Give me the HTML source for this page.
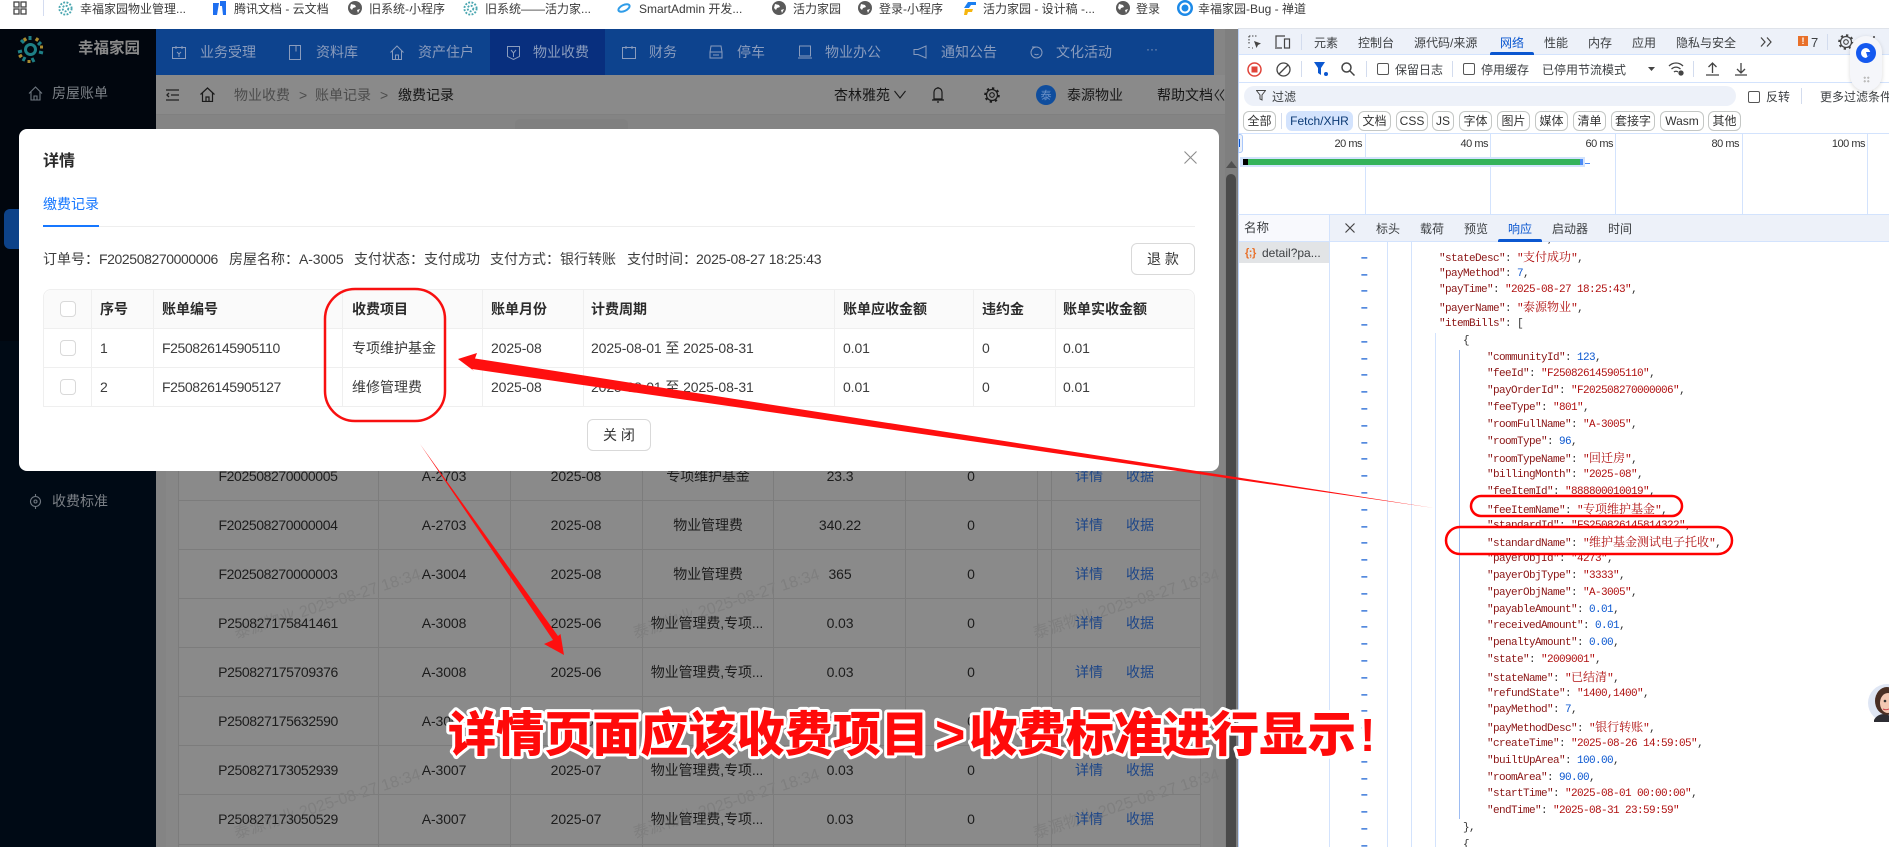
<!DOCTYPE html>
<html lang="zh"><head><meta charset="utf-8"><title>详情</title>
<style>
*{box-sizing:border-box}
html,body{margin:0;padding:0}
body{width:1889px;height:847px;overflow:hidden;position:relative;background:#fff;font-family:"Liberation Sans","Noto Sans CJK SC",sans-serif;font-size:14px;color:#333}
.a,.t,svg.a{position:absolute}
.t{white-space:nowrap;line-height:20px;height:20px}
.bm{font-size:12px;color:#3a3a3a;top:-1px}
.nv{color:#8a9cbd;top:42px}
.bt{color:#1c1c1c;letter-spacing:-.1px;text-align:center;transform:translateX(-50%)}
.id{letter-spacing:-.4px}
.ln{color:#1d4688;letter-spacing:0}
.h{height:1px;background:#7c7c7c;left:178px;width:1022px}
.v{width:1px;background:#7c7c7c;top:431px;height:416px}
.mv{width:1px;background:#efefef;top:289px;height:117px}
.mh{height:1px;background:#efefef;left:43px;width:1152px}
.th{font-weight:700;color:#2b2b2b;top:299px;font-size:14px}
.td{color:#3c3c3c;letter-spacing:-.1px}
.tid{letter-spacing:-.4px}
.cb{width:16px;height:16px;border:1px solid #d9d9d9;border-radius:4px;background:#fff;left:60px}
.btn{border:1px solid #d9d9d9;border-radius:6px;background:#fff;text-align:center;color:#333;height:32px;line-height:30px;width:64px}
.d{font-size:12px;color:#3d4043;line-height:16px;height:16px;white-space:nowrap;position:absolute}
.tab{top:35px}
.sep{width:1px;background:#d3dcee;position:absolute}
.chip{position:absolute;top:111px;height:20px;border:1px solid #c4c7c5;border-radius:6px;font-size:12px;line-height:18px;text-align:center;color:#333;background:#fff}
.dck{width:12px;height:12px;border:1px solid #555;border-radius:2px;position:absolute}
.gl{position:absolute;width:1px;top:133px;height:81px;background:#d3e3fd}
.tl{position:absolute;top:137px;font-size:11px;letter-spacing:-.5px;color:#333;line-height:14px;text-align:right;width:40px}
.rv{position:absolute;width:1px;background:#d3e3fd}
#j{position:absolute;left:1330px;top:242px;width:559px;height:605px;overflow:hidden;background:transparent}
#ji{position:absolute;left:0;top:-10px;width:559px}
.l{height:16.8px;line-height:16.8px;white-space:nowrap;font-family:"Liberation Mono","Noto Serif CJK SC",monospace;font-size:11px;letter-spacing:-.6px;color:#333}
.l i{font-style:normal;font-family:"Noto Serif CJK SC","Liberation Serif",serif;font-size:12px;letter-spacing:0}
.l b{font-weight:400;color:#8b1515}
.l u{text-decoration:none;color:#b01010}
.l s{text-decoration:none;color:#0b57d0}
.p1{padding-left:109px}.p2{padding-left:133px}.p3{padding-left:157px}
#ds{position:absolute;left:1361px;top:232px;width:8px}
#ds div{height:16.8px;line-height:16.8px;color:#0b57d0;font-size:12px;font-weight:700}
.wm{position:absolute;color:#7f7f7f;font-size:16px;white-space:nowrap;transform:rotate(-18deg);transform-origin:0 50%;line-height:20px}
</style></head><body>

<!-- bookmarks -->
<div class="a" style="left:0;top:0;width:1889px;height:29px;background:#fff"></div>
<svg class="a" style="left:13px;top:1px" width="14" height="14" viewBox="0 0 14 14" fill="none" stroke="#444" stroke-width="1.3"><rect x="1" y="1" width="5" height="5"/><rect x="8" y="1" width="5" height="5"/><rect x="1" y="8" width="5" height="5"/><rect x="8" y="8" width="5" height="5"/></svg>
<div class="a" style="left:43px;top:0;width:1px;height:16px;background:#d4dcf0"></div>
<svg class="a" style="left:58px;top:1px" width="15" height="15" viewBox="0 0 16 16" fill="none" stroke="#4aa6b0" stroke-width="2" stroke-dasharray="2 1.5"><circle cx="8" cy="8" r="3"/><circle cx="8" cy="8" r="6.5"/></svg>
<div class="t bm" style="left:80px">幸福家园物业管理...</div>
<svg class="a" style="left:212px;top:0" width="15" height="15" viewBox="0 0 15 15"><path d="M1 3h6L5 15H1zM8 1h6v14h-3l-1-9H8z" fill="#1e6ff0"/></svg>
<div class="t bm" style="left:234px">腾讯文档 - 云文档</div>
<svg class="a" style="left:348px;top:1px" width="14" height="14" viewBox="0 0 14 14"><circle cx="7" cy="7" r="7" fill="#5a5a5a"/><path d="M3 3l4 1 1 2-3 1-1 2-2-2zM9 9l3-1-2 4z" fill="#fff"/></svg>
<div class="t bm" style="left:369px">旧系统-小程序</div>
<svg class="a" style="left:463px;top:1px" width="15" height="15" viewBox="0 0 16 16" fill="none" stroke="#4aa6b0" stroke-width="2" stroke-dasharray="2 1.5"><circle cx="8" cy="8" r="3"/><circle cx="8" cy="8" r="6.5"/></svg>
<div class="t bm" style="left:485px">旧系统——活力家...</div>
<svg class="a" style="left:617px;top:2px" width="14" height="12" viewBox="0 0 14 12" fill="none" stroke="#2f9ce8" stroke-width="2"><ellipse cx="7" cy="6" rx="6" ry="3" transform="rotate(-25 7 6)"/></svg>
<div class="t bm" style="left:639px">SmartAdmin 开发...</div>
<svg class="a" style="left:772px;top:1px" width="14" height="14" viewBox="0 0 14 14"><circle cx="7" cy="7" r="7" fill="#5a5a5a"/><path d="M3 3l4 1 1 2-3 1-1 2-2-2zM9 9l3-1-2 4z" fill="#fff"/></svg>
<div class="t bm" style="left:793px">活力家园</div>
<svg class="a" style="left:858px;top:1px" width="14" height="14" viewBox="0 0 14 14"><circle cx="7" cy="7" r="7" fill="#5a5a5a"/><path d="M3 3l4 1 1 2-3 1-1 2-2-2zM9 9l3-1-2 4z" fill="#fff"/></svg>
<div class="t bm" style="left:879px">登录-小程序</div>
<svg class="a" style="left:963px;top:2px" width="14" height="13" viewBox="0 0 14 13"><path d="M5 0h8v3H8L6 6H1z" fill="#1c7ff0"/><path d="M2 7h8l-1 3H5l-1 3H1z" fill="#f5b50e"/></svg>
<div class="t bm" style="left:983px">活力家园 - 设计稿 -...</div>
<svg class="a" style="left:1116px;top:1px" width="14" height="14" viewBox="0 0 14 14"><circle cx="7" cy="7" r="7" fill="#5a5a5a"/><path d="M3 3l4 1 1 2-3 1-1 2-2-2zM9 9l3-1-2 4z" fill="#fff"/></svg>
<div class="t bm" style="left:1136px">登录</div>
<svg class="a" style="left:1177px;top:0" width="16" height="16" viewBox="0 0 16 16"><circle cx="8" cy="8" r="8" fill="#1d8ae8"/><circle cx="8" cy="8" r="4.5" fill="none" stroke="#fff" stroke-width="2"/></svg>
<div class="t bm" style="left:1198px">幸福家园-Bug - 禅道</div>

<!-- page behind -->
<div class="a" style="left:0;top:29px;width:156px;height:818px;background:#000a15"></div>
<div class="a" style="left:0;top:29px;width:156px;height:312px;background:#01060e"></div>
<div class="a" style="left:4px;top:209px;width:60px;height:40px;background:#0d4289;border-radius:6px"></div>
<svg class="a" style="left:16px;top:35px" width="29" height="29" viewBox="0 0 29 29" fill="none" stroke-width="3"><circle cx="14.5" cy="14.5" r="5" stroke="#1e7f86"/><path d="M14 1v4M25 7l-3 3M27 18l-4-1M18 27l-2-4M7 26l2-4M2 17l4-1M5 5l3 3" stroke="#1e7f86"/><path d="M8 3l2 3M22 3l-2 3M27 12h-3M13 28v-3M3 22l3-2" stroke="#a88a30"/></svg>
<div class="t" style="left:78px;top:39px;font-weight:700;font-size:15.5px;color:#8a8a8a">幸福家园</div>
<svg class="a" style="left:28px;top:86px" width="15" height="15" viewBox="0 0 15 15" fill="none" stroke="#6f7780" stroke-width="1.1"><path d="M1 7.5 7.5 1 14 7.5M3 6v8h9V6M6 14v-4h3v4"/></svg>
<div class="t" style="left:52px;top:83px;color:#7b8086">房屋账单</div>
<svg class="a" style="left:28px;top:494px" width="15" height="15" viewBox="0 0 15 15" fill="none" stroke="#6f7780" stroke-width="1.1"><circle cx="7.5" cy="7.5" r="5"/><circle cx="7.5" cy="7.5" r="1.5"/><path d="M7.5 0v2.5M7.5 12.5V15"/></svg>
<div class="t" style="left:52px;top:491px;color:#7b8086">收费标准</div>

<!-- nav -->
<div class="a" style="left:156px;top:29px;width:1058px;height:46px;background:#0d438e"></div>
<div class="a" style="left:490px;top:29px;width:115px;height:46px;background:#082f7e"></div>
<div class="a" style="left:1214px;top:29px;width:11px;height:46px;background:#858585"></div>
<svg class="a" style="left:172px;top:45px" width="14" height="14" viewBox="0 0 14 14" fill="none" stroke="#8a9cbd"><rect x=".5" y="2.5" width="13" height="11"/><path d="M4 1v3M10 1v3M5 7l2 2 2-2M7 9v3"/></svg>
<div class="t nv" style="left:200px">业务受理</div>
<svg class="a" style="left:289px;top:45px" width="12" height="15" viewBox="0 0 12 15" fill="none" stroke="#8a9cbd"><rect x=".5" y=".5" width="11" height="14"/><path d="M7 .5v6"/></svg>
<div class="t nv" style="left:316px">资料库</div>
<svg class="a" style="left:390px;top:45px" width="14" height="15" viewBox="0 0 14 15" fill="none" stroke="#8a9cbd"><path d="M.5 7.5 7 1l6.5 6.5M2.5 6v8.500h9V6M5.500 14.500V10h3v4.500"/></svg>
<div class="t nv" style="left:418px">资产住户</div>
<svg class="a" style="left:507px;top:45px" width="13" height="15" viewBox="0 0 13 15" fill="none" stroke="#8a9cbd"><path d="M.5 1.500h12v10l-6 3-6-3zM4 5l2.500 3L9 5M6.500 8v4"/></svg>
<div class="t nv" style="left:533px">物业收费</div>
<svg class="a" style="left:622px;top:45px" width="14" height="14" viewBox="0 0 14 14" fill="none" stroke="#8a9cbd"><rect x=".5" y="2.500" width="13" height="11"/><path d="M4 1v3M10 1v3"/></svg>
<div class="t nv" style="left:649px">财务</div>
<svg class="a" style="left:709px;top:45px" width="14" height="14" viewBox="0 0 14 14" fill="none" stroke="#8a9cbd"><path d="M2 1h10l1 6v6H1V7zM1 7h12M4 10h6"/></svg>
<div class="t nv" style="left:737px">停车</div>
<svg class="a" style="left:798px;top:45px" width="14" height="14" viewBox="0 0 14 14" fill="none" stroke="#8a9cbd"><path d="M1.500 1h11v10h-11zM0 13h14"/></svg>
<div class="t nv" style="left:825px">物业办公</div>
<svg class="a" style="left:913px;top:45px" width="14" height="14" viewBox="0 0 14 14" fill="none" stroke="#8a9cbd"><path d="M13 1v12L5 9.500H1v-5h4z"/></svg>
<div class="t nv" style="left:941px">通知公告</div>
<svg class="a" style="left:1030px;top:45px" width="13" height="14" viewBox="0 0 13 14" fill="none" stroke="#8a9cbd"><circle cx="6.500" cy="7.500" r="5.500"/><path d="M2 2h4M4.500 6h.01M8.500 6h.01M4.500 9c1 1 3 1 4 0"/></svg>
<div class="t nv" style="left:1056px">文化活动</div>
<div class="t nv" style="left:1146px;top:39px;font-size:12px">···</div>

<!-- breadcrumb bar -->
<div class="a" style="left:156px;top:75px;width:1069px;height:772px;background:#848484"></div>
<div class="a" style="left:166px;top:129px;width:1047px;height:718px;background:#878787"></div>
<div class="a" style="left:178px;top:431px;width:1022px;height:416px;background:#8a8a8a"></div>
<div class="a" style="left:156px;top:75px;width:1069px;height:39px;background:#8a8a8a"></div>
<div class="a" style="left:156px;top:114px;width:1069px;height:1px;background:#808080"></div>
<div class="a" style="left:515px;top:119px;width:113px;height:12px;background:#808080;border-radius:5px 5px 0 0"></div>
<svg class="a" style="left:166px;top:89px" width="14" height="12" viewBox="0 0 14 12" fill="none" stroke="#222" stroke-width="1.3"><path d="M0 1h13M5 6h8M0 11h13M3 4 1 6l2 2"/></svg>
<svg class="a" style="left:200px;top:87px" width="15" height="15" viewBox="0 0 15 15" fill="none" stroke="#1a1a1a" stroke-width="1.2"><path d="M.5 7.500 7.500 1l7 6.500M2.500 6v8.500h10V6M6 14.500V10h3v4.500"/></svg>
<div class="t" style="left:234px;top:85px;color:#4c4c4c">物业收费</div>
<div class="t" style="left:299px;top:85px;color:#4c4c4c">&gt;</div>
<div class="t" style="left:315px;top:85px;color:#4c4c4c">账单记录</div>
<div class="t" style="left:380px;top:85px;color:#4c4c4c">&gt;</div>
<div class="t" style="left:398px;top:85px;color:#161616">缴费记录</div>
<div class="t" style="left:834px;top:85px;color:#161616">杏林雅苑</div>
<svg class="a" style="left:894px;top:90px" width="12" height="9" viewBox="0 0 12 9" fill="none" stroke="#1a1a1a" stroke-width="1.1"><path d="M.5 1 6 8l5.500-7"/></svg>
<svg class="a" style="left:931px;top:86px" width="14" height="18" viewBox="0 0 14 18" fill="none" stroke="#1a1a1a" stroke-width="1.2"><path d="M7 1v1M3 13V6a4 4 0 0 1 8 0v7zM1 14h12M6 16h2"/></svg>
<svg class="a" style="left:984px;top:87px" width="16" height="16" viewBox="0 0 16 16" fill="none" stroke="#1a1a1a"><circle cx="8" cy="8" r="5.500" stroke-width="1.200"/><circle cx="8" cy="8" r="2.300" stroke-width="1.100"/><circle cx="8" cy="8" r="6.800" stroke-width="2" stroke-dasharray="2.300 3"/></svg>
<div class="a" style="left:1036px;top:85px;width:20px;height:20px;border-radius:50%;background:#0f4d9d;color:#6c92c8;font-size:11px;text-align:center;line-height:22px">泰</div>
<div class="t" style="left:1067px;top:85px;color:#161616">泰源物业</div>
<div class="t" style="left:1157px;top:85px;color:#161616">帮助文档</div>
<svg class="a" style="left:1214px;top:89px" width="11" height="12" viewBox="0 0 11 12" fill="none" stroke="#1a1a1a" stroke-width="1"><path d="M5 .5 1 6l4 5.500M10 .5 6 6l4 5.500"/></svg>

<!-- background table -->
<div class="a h" style="top:500px"></div><div class="a h" style="top:549px"></div><div class="a h" style="top:598px"></div><div class="a h" style="top:647px"></div><div class="a h" style="top:696px"></div><div class="a h" style="top:745px"></div><div class="a h" style="top:794px"></div><div class="a h" style="top:844px"></div>
<div class="a v" style="left:178px"></div><div class="a v" style="left:378px"></div><div class="a v" style="left:510px"></div><div class="a v" style="left:642px"></div><div class="a v" style="left:773px"></div><div class="a v" style="left:905px"></div><div class="a v" style="left:1037px"></div><div class="a v" style="left:1051px"></div><div class="a v" style="left:1200px"></div>

<div class="wm" style="left:235px;top:625px">泰源物业 2025-08-27 18:34</div>
<div class="wm" style="left:634px;top:625px">泰源物业 2025-08-27 18:34</div>
<div class="wm" style="left:1034px;top:625px;width:200px;overflow:hidden">泰源物业 2025-08-27 18:34</div>
<div class="wm" style="left:235px;top:825px">泰源物业 2025-08-27 18:34</div>
<div class="wm" style="left:634px;top:825px">泰源物业 2025-08-27 18:34</div>
<div class="wm" style="left:1034px;top:825px;width:200px;overflow:hidden">泰源物业 2025-08-27 18:34</div>

<div class="t bt id" style="left:278px;top:466px">F202508270000005</div><div class="t bt" style="left:444px;top:466px">A-2703</div><div class="t bt" style="left:576px;top:466px">2025-08</div><div class="t bt" style="left:708px;top:466px">专项维护基金</div><div class="t bt" style="left:840px;top:466px">23.3</div><div class="t bt" style="left:971px;top:466px">0</div><div class="t bt ln" style="left:1089px;top:466px">详情</div><div class="t bt ln" style="left:1140px;top:466px">收据</div>
<div class="t bt id" style="left:278px;top:515px">F202508270000004</div><div class="t bt" style="left:444px;top:515px">A-2703</div><div class="t bt" style="left:576px;top:515px">2025-08</div><div class="t bt" style="left:708px;top:515px">物业管理费</div><div class="t bt" style="left:840px;top:515px">340.22</div><div class="t bt" style="left:971px;top:515px">0</div><div class="t bt ln" style="left:1089px;top:515px">详情</div><div class="t bt ln" style="left:1140px;top:515px">收据</div>
<div class="t bt id" style="left:278px;top:564px">F202508270000003</div><div class="t bt" style="left:444px;top:564px">A-3004</div><div class="t bt" style="left:576px;top:564px">2025-08</div><div class="t bt" style="left:708px;top:564px">物业管理费</div><div class="t bt" style="left:840px;top:564px">365</div><div class="t bt" style="left:971px;top:564px">0</div><div class="t bt ln" style="left:1089px;top:564px">详情</div><div class="t bt ln" style="left:1140px;top:564px">收据</div>
<div class="t bt id" style="left:278px;top:613px">P250827175841461</div><div class="t bt" style="left:444px;top:613px">A-3008</div><div class="t bt" style="left:576px;top:613px">2025-06</div><div class="t bt" style="left:707px;top:613px">物业管理费,专项...</div><div class="t bt" style="left:840px;top:613px">0.03</div><div class="t bt" style="left:971px;top:613px">0</div><div class="t bt ln" style="left:1089px;top:613px">详情</div><div class="t bt ln" style="left:1140px;top:613px">收据</div>
<div class="t bt id" style="left:278px;top:662px">P250827175709376</div><div class="t bt" style="left:444px;top:662px">A-3008</div><div class="t bt" style="left:576px;top:662px">2025-06</div><div class="t bt" style="left:707px;top:662px">物业管理费,专项...</div><div class="t bt" style="left:840px;top:662px">0.03</div><div class="t bt" style="left:971px;top:662px">0</div><div class="t bt ln" style="left:1089px;top:662px">详情</div><div class="t bt ln" style="left:1140px;top:662px">收据</div>
<div class="t bt id" style="left:278px;top:711px">P250827175632590</div><div class="t bt" style="left:444px;top:711px">A-3008</div><div class="t bt" style="left:576px;top:711px">2025-06</div><div class="t bt" style="left:707px;top:711px">物业管理费,专项...</div><div class="t bt" style="left:840px;top:711px">0.03</div><div class="t bt" style="left:971px;top:711px">0</div><div class="t bt ln" style="left:1089px;top:711px">详情</div><div class="t bt ln" style="left:1140px;top:711px">收据</div>
<div class="t bt id" style="left:278px;top:760px">P250827173052939</div><div class="t bt" style="left:444px;top:760px">A-3007</div><div class="t bt" style="left:576px;top:760px">2025-07</div><div class="t bt" style="left:707px;top:760px">物业管理费,专项...</div><div class="t bt" style="left:840px;top:760px">0.03</div><div class="t bt" style="left:971px;top:760px">0</div><div class="t bt ln" style="left:1089px;top:760px">详情</div><div class="t bt ln" style="left:1140px;top:760px">收据</div>
<div class="t bt id" style="left:278px;top:809px">P250827173050529</div><div class="t bt" style="left:444px;top:809px">A-3007</div><div class="t bt" style="left:576px;top:809px">2025-07</div><div class="t bt" style="left:707px;top:809px">物业管理费,专项...</div><div class="t bt" style="left:840px;top:809px">0.03</div><div class="t bt" style="left:971px;top:809px">0</div><div class="t bt ln" style="left:1089px;top:809px">详情</div><div class="t bt ln" style="left:1140px;top:809px">收据</div>

<!-- page scrollbar -->
<div class="a" style="left:1225px;top:29px;width:13px;height:818px;background:#7f7f7f"></div>
<svg class="a" style="left:1226px;top:161px" width="11" height="7" viewBox="0 0 11 7"><path d="M5.500 0 11 7H0z" fill="#505050"/></svg>
<div class="a" style="left:1226px;top:174px;width:10px;height:673px;background:#4a4a4a;border-radius:5px 5px 0 0"></div>

<!-- modal -->
<div class="a" style="left:19px;top:129px;width:1200px;height:342px;background:#fff;border-radius:8px"></div>
<div class="t" style="left:43px;top:152px;font-size:16px;font-weight:700;color:#2a2a2a">详情</div>
<svg class="a" style="left:1184px;top:151px" width="13" height="13" viewBox="0 0 13 13" fill="none" stroke="#8c8c8c" stroke-width="1.1"><path d="M.5.500l12 12M12.500.500l-12 12"/></svg>
<div class="t" style="left:43px;top:194px;color:#1677ff">缴费记录</div>
<div class="a" style="left:43px;top:226px;width:1152px;height:1px;background:#eeeeee"></div>
<div class="a" style="left:43px;top:225px;width:56px;height:2px;background:#1677ff"></div>
<div class="t td" style="left:43px;top:249px;letter-spacing:0">订单号&#xFF1A;</div><div class="t td tid" style="left:99px;top:249px">F202508270000006</div>
<div class="t td" style="left:229px;top:249px;letter-spacing:0">房屋名称&#xFF1A;</div><div class="t td" style="left:299px;top:249px">A-3005</div>
<div class="t td" style="left:354px;top:249px;letter-spacing:0">支付状态&#xFF1A;支付成功</div>
<div class="t td" style="left:490px;top:249px;letter-spacing:0">支付方式&#xFF1A;银行转账</div>
<div class="t td" style="left:627px;top:249px;letter-spacing:0">支付时间&#xFF1A;</div><div class="t td" style="left:696px;top:249px;letter-spacing:-.25px">2025-08-27 18:25:43</div>
<div class="a btn" style="left:1131px;top:243px">退 款</div>

<div class="a" style="left:43px;top:289px;width:1152px;height:117px;border:1px solid #efefef;border-bottom:none;border-radius:8px 8px 0 0"></div>
<div class="a" style="left:44px;top:290px;width:1150px;height:38px;background:#fafafa;border-radius:8px 8px 0 0"></div>
<div class="a mh" style="top:328px"></div><div class="a mh" style="top:367px"></div><div class="a mh" style="top:406px"></div>
<div class="a mv" style="left:91px"></div><div class="a mv" style="left:153px"></div><div class="a mv" style="left:342px"></div><div class="a mv" style="left:482px"></div><div class="a mv" style="left:583px"></div><div class="a mv" style="left:834px"></div><div class="a mv" style="left:973px"></div><div class="a mv" style="left:1055px"></div>
<div class="a cb" style="top:301px"></div><div class="a cb" style="top:340px"></div><div class="a cb" style="top:379px"></div>
<div class="t th" style="left:100px">序号</div><div class="t th" style="left:162px">账单编号</div><div class="t th" style="left:352px">收费项目</div><div class="t th" style="left:491px">账单月份</div><div class="t th" style="left:591px">计费周期</div><div class="t th" style="left:843px">账单应收金额</div><div class="t th" style="left:982px">违约金</div><div class="t th" style="left:1063px">账单实收金额</div>
<div class="t td" style="left:100px;top:338px">1</div><div class="t td tid" style="left:162px;top:338px">F250826145905110</div><div class="t td" style="left:352px;top:338px;letter-spacing:0">专项维护基金</div><div class="t td" style="left:491px;top:338px">2025-08</div><div class="t td" style="left:591px;top:338px">2025-08-01 至 2025-08-31</div><div class="t td" style="left:843px;top:338px">0.01</div><div class="t td" style="left:982px;top:338px">0</div><div class="t td" style="left:1063px;top:338px">0.01</div>
<div class="t td" style="left:100px;top:377px">2</div><div class="t td tid" style="left:162px;top:377px">F250826145905127</div><div class="t td" style="left:352px;top:377px;letter-spacing:0">维修管理费</div><div class="t td" style="left:491px;top:377px">2025-08</div><div class="t td" style="left:591px;top:377px">2025-08-01 至 2025-08-31</div><div class="t td" style="left:843px;top:377px">0.01</div><div class="t td" style="left:982px;top:377px">0</div><div class="t td" style="left:1063px;top:377px">0.01</div>
<div class="a btn" style="left:587px;top:419px">关 闭</div>

<!-- devtools -->
<div class="a" style="left:1238px;top:29px;width:651px;height:818px;background:#fff"></div>
<div class="a" style="left:1238px;top:28px;width:651px;height:1px;background:#dfe3ea"></div>
<div class="a" style="left:1238px;top:29px;width:651px;height:26px;background:#edf1f9;border-bottom:1px solid #d3e3fd"></div>
<svg class="a" style="left:1248px;top:35px" width="14" height="14" viewBox="0 0 14 14" fill="none" stroke="#444" stroke-width="1.1"><path d="M1 1h8M1 1v8M1 12v1M4 13h1" stroke-dasharray="1.500 1.500"/><path d="M6 6l7 2.500-3 1.500-1.500 3z" fill="#444" stroke="none"/></svg>
<svg class="a" style="left:1275px;top:35px" width="16" height="14" viewBox="0 0 16 14" fill="none" stroke="#444" stroke-width="1.200"><path d="M1 12V1h9M0 13h7"/><rect x="9.500" y="4" width="5" height="9"/></svg>
<div class="sep" style="left:1301px;top:34px;height:16px"></div>
<div class="d tab" style="left:1314px">元素</div><div class="d tab" style="left:1358px">控制台</div><div class="d tab" style="left:1414px">源代码/来源</div><div class="d tab" style="left:1500px;color:#0b57d0">网络</div><div class="d tab" style="left:1544px">性能</div><div class="d tab" style="left:1588px">内存</div><div class="d tab" style="left:1632px">应用</div><div class="d tab" style="left:1676px">隐私与安全</div>
<div class="a" style="left:1490px;top:52px;width:44px;height:3px;background:#0b57d0;border-radius:2px 2px 0 0"></div>
<svg class="a" style="left:1760px;top:37px" width="12" height="10" viewBox="0 0 12 10" fill="none" stroke="#444" stroke-width="1.200"><path d="M1 .500 5 5 1 9.500M7 .500 11 5 7 9.500"/></svg>
<div class="a" style="left:1798px;top:36px;width:10px;height:10px;background:#e8702a;color:#fff;font-size:9px;line-height:10px;text-align:center;font-weight:700">!</div>
<div class="d tab" style="left:1811px;font-size:13px">7</div>
<div class="sep" style="left:1827px;top:34px;height:16px"></div>
<svg class="a" style="left:1838px;top:34px" width="16" height="16" viewBox="0 0 16 16" fill="none" stroke="#444"><circle cx="8" cy="8" r="5.500" stroke-width="1.200"/><circle cx="8" cy="8" r="2.300" stroke-width="1.100"/><circle cx="8" cy="8" r="6.800" stroke-width="2" stroke-dasharray="2.300 3"/></svg>
<div class="a" style="left:1873px;top:36px;width:2px;height:2px;background:#444;border-radius:50%"></div>

<div class="a" style="left:1238px;top:55px;width:651px;height:28px;background:#fff;border-bottom:1px solid #d3e3fd"></div>
<svg class="a" style="left:1247px;top:62px" width="15" height="15" viewBox="0 0 15 15"><circle cx="7.500" cy="7.500" r="6.500" fill="none" stroke="#e0443a" stroke-width="1.500"/><rect x="4.500" y="4.500" width="6" height="6" fill="#e0443a"/></svg>
<svg class="a" style="left:1276px;top:62px" width="15" height="15" viewBox="0 0 15 15" fill="none" stroke="#444" stroke-width="1.300"><circle cx="7.500" cy="7.500" r="6.500"/><path d="M3 12 12 3"/></svg>
<div class="sep" style="left:1301px;top:61px;height:16px"></div>
<svg class="a" style="left:1314px;top:62px" width="15" height="14" viewBox="0 0 15 14"><path d="M0 0h11L7 6v7L4 11V6z" fill="#0b57d0"/><circle cx="12" cy="12" r="2" fill="#0b57d0"/></svg>
<svg class="a" style="left:1341px;top:62px" width="14" height="14" viewBox="0 0 14 14" fill="none" stroke="#444" stroke-width="1.500"><circle cx="5.500" cy="5.500" r="4.500"/><path d="M8.500 8.500 13.500 13.500"/></svg>
<div class="sep" style="left:1366px;top:61px;height:16px"></div>
<div class="dck" style="left:1377px;top:63px"></div><div class="d" style="left:1395px;top:62px">保留日志</div>
<div class="sep" style="left:1452px;top:61px;height:16px"></div>
<div class="dck" style="left:1463px;top:63px"></div><div class="d" style="left:1481px;top:62px">停用缓存</div>
<div class="d" style="left:1542px;top:62px">已停用节流模式</div>
<svg class="a" style="left:1648px;top:67px" width="7" height="4" viewBox="0 0 7 4"><path d="M0 0h7L3.500 4z" fill="#444"/></svg>
<svg class="a" style="left:1668px;top:62px" width="16" height="14" viewBox="0 0 16 14" fill="none" stroke="#444" stroke-width="1.300"><path d="M1 4c4-4 10-4 14 0M3.500 7c3-2.500 6-2.500 9 0M6 10c1-1 3-1 4 0"/><circle cx="13" cy="11" r="2" fill="#444"/></svg>
<div class="sep" style="left:1693px;top:61px;height:16px"></div>
<svg class="a" style="left:1706px;top:62px" width="13" height="14" viewBox="0 0 13 14" fill="none" stroke="#444" stroke-width="1.300"><path d="M6.500 11V1M2.500 5l4-4 4 4M0 13h13"/></svg>
<svg class="a" style="left:1735px;top:62px" width="12" height="14" viewBox="0 0 12 14" fill="none" stroke="#444" stroke-width="1.300"><path d="M6 1v10M2 7l4 4 4-4M0 13h12"/></svg>

<div class="a" style="left:1244px;top:86px;width:492px;height:20px;border-radius:10px;background:#edf1f9"></div>
<svg class="a" style="left:1256px;top:90px" width="10" height="11" viewBox="0 0 10 11" fill="none" stroke="#444"><path d="M.5.500h9L6 5v5L4 9V5z"/></svg>
<div class="d" style="left:1272px;top:89px">过滤</div>
<div class="dck" style="left:1748px;top:91px"></div><div class="d" style="left:1766px;top:89px">反转</div>
<div class="sep" style="left:1801px;top:88px;height:16px"></div>
<div class="d" style="left:1820px;top:89px">更多过滤条件</div>

<div class="chip" style="left:1243px;width:33px">全部</div>
<div class="sep" style="left:1281px;top:113px;height:16px"></div>
<div class="chip" style="left:1286px;width:67px;background:#d3e3fd;border-color:#d3e3fd;color:#0b3a75">Fetch/XHR</div>
<div class="chip" style="left:1358px;width:33px">文档</div>
<div class="chip" style="left:1396px;width:32px">CSS</div>
<div class="chip" style="left:1432px;width:22px">JS</div>
<div class="chip" style="left:1459px;width:33px">字体</div>
<div class="chip" style="left:1497px;width:33px">图片</div>
<div class="chip" style="left:1535px;width:33px">媒体</div>
<div class="chip" style="left:1573px;width:33px">清单</div>
<div class="chip" style="left:1611px;width:44px">套接字</div>
<div class="chip" style="left:1660px;width:44px">Wasm</div>
<div class="chip" style="left:1708px;width:33px">其他</div>
<div class="a" style="left:1238px;top:133px;width:651px;height:1px;background:#d3e3fd"></div>
<div class="a" style="left:1238px;top:29px;width:1px;height:818px;background:#bcd2f8"></div>
<div class="a" style="left:1238px;top:134px;width:5px;height:19px;background:#edf1f9;border:1px solid #a8c7fa;border-radius:0 3px 3px 0"></div>
<div class="a" style="left:1239px;top:139px;width:1px;height:8px;background:#0b57d0"></div>
<div class="gl" style="left:1365px"></div><div class="gl" style="left:1490px"></div><div class="gl" style="left:1615px"></div><div class="gl" style="left:1742px"></div><div class="gl" style="left:1867px"></div>
<div class="tl" style="left:1322px">20 ms</div><div class="tl" style="left:1448px">40 ms</div><div class="tl" style="left:1573px">60 ms</div><div class="tl" style="left:1699px">80 ms</div><div class="tl" style="left:1825px">100 ms</div>
<div class="a" style="left:1240px;top:157px;width:345px;height:10px;background:#d3e3fd"></div>
<div class="a" style="left:1243px;top:159px;width:5px;height:6px;background:#000"></div>
<div class="a" style="left:1248px;top:159px;width:332px;height:6px;background:#34b35a"></div>
<div class="a" style="left:1580px;top:159px;width:3px;height:6px;background:#4c8bf5"></div>
<div class="a" style="left:1585px;top:163px;width:5px;height:1px;background:#4c8bf5"></div>
<div class="a" style="left:1238px;top:214px;width:651px;height:1px;background:#d3e3fd"></div>

<div class="a" style="left:1239px;top:215px;width:90px;height:27px;background:#f8f9fd;border-bottom:1px solid #d3e3fd"></div>
<div class="d" style="left:1244px;top:220px;font-size:12.500px">名称</div>
<div class="a" style="left:1239px;top:242px;width:90px;height:21px;background:#e2e4e6"></div>
<div class="d" style="left:1245px;top:245px;color:#e8702a;font-weight:700;font-size:11px;letter-spacing:-.5px">{;}</div>
<div class="d" style="left:1262px;top:245px">detail?pa...</div>
<div class="rv" style="left:1329px;top:215px;height:632px"></div>
<div class="rv" style="left:1387px;top:242px;height:605px"></div>
<div class="rv" style="left:1411px;top:242px;height:605px"></div>
<div class="rv" style="left:1435px;top:333px;height:514px"></div>
<div class="rv" style="left:1459px;top:350px;height:469px;background:#9dbcf2"></div>

<div id="ds"><div>–</div><div>–</div><div>–</div><div>–</div><div>–</div><div>–</div><div>–</div><div>–</div><div>–</div><div>–</div><div>–</div><div>–</div><div>–</div><div>–</div><div>–</div><div>–</div><div>–</div><div>–</div><div>–</div><div>–</div><div>–</div><div>–</div><div>–</div><div>–</div><div>–</div><div>–</div><div>–</div><div>–</div><div>–</div><div>–</div><div>–</div><div>–</div><div>–</div><div>–</div><div>–</div><div>–</div><div>–</div></div>

<div id="j"><div id="ji">
<div class="l p1"><b>"state"</b>: <u>"2009001"</u>,</div>
<div class="l p1"><b>"stateDesc"</b>: <u>"<i>支付成功</i>"</u>,</div>
<div class="l p1"><b>"payMethod"</b>: <s>7</s>,</div>
<div class="l p1"><b>"payTime"</b>: <u>"2025-08-27 18:25:43"</u>,</div>
<div class="l p1"><b>"payerName"</b>: <u>"<i>泰源物业</i>"</u>,</div>
<div class="l p1"><b>"itemBills"</b>: [</div>
<div class="l p2">{</div>
<div class="l p3"><b>"communityId"</b>: <s>123</s>,</div>
<div class="l p3"><b>"feeId"</b>: <u>"F250826145905110"</u>,</div>
<div class="l p3"><b>"payOrderId"</b>: <u>"F202508270000006"</u>,</div>
<div class="l p3"><b>"feeType"</b>: <u>"801"</u>,</div>
<div class="l p3"><b>"roomFullName"</b>: <u>"A-3005"</u>,</div>
<div class="l p3"><b>"roomType"</b>: <s>96</s>,</div>
<div class="l p3"><b>"roomTypeName"</b>: <u>"<i>回迁房</i>"</u>,</div>
<div class="l p3"><b>"billingMonth"</b>: <u>"2025-08"</u>,</div>
<div class="l p3"><b>"feeItemId"</b>: <u>"888800010019"</u>,</div>
<div class="l p3"><b>"feeItemName"</b>: <u>"<i>专项维护基金</i>"</u>,</div>
<div class="l p3"><b>"standardId"</b>: <u>"FS250826145814322"</u>,</div>
<div class="l p3"><b>"standardName"</b>: <u>"<i>维护基金测试电子托收</i>"</u>,</div>
<div class="l p3"><b>"payerObjId"</b>: <u>"4273"</u>,</div>
<div class="l p3"><b>"payerObjType"</b>: <u>"3333"</u>,</div>
<div class="l p3"><b>"payerObjName"</b>: <u>"A-3005"</u>,</div>
<div class="l p3"><b>"payableAmount"</b>: <s>0.01</s>,</div>
<div class="l p3"><b>"receivedAmount"</b>: <s>0.01</s>,</div>
<div class="l p3"><b>"penaltyAmount"</b>: <s>0.00</s>,</div>
<div class="l p3"><b>"state"</b>: <u>"2009001"</u>,</div>
<div class="l p3"><b>"stateName"</b>: <u>"<i>已结清</i>"</u>,</div>
<div class="l p3"><b>"refundState"</b>: <u>"1400,1400"</u>,</div>
<div class="l p3"><b>"payMethod"</b>: <s>7</s>,</div>
<div class="l p3"><b>"payMethodDesc"</b>: <u>"<i>银行转账</i>"</u>,</div>
<div class="l p3"><b>"createTime"</b>: <u>"2025-08-26 14:59:05"</u>,</div>
<div class="l p3"><b>"builtUpArea"</b>: <s>100.00</s>,</div>
<div class="l p3"><b>"roomArea"</b>: <s>90.00</s>,</div>
<div class="l p3"><b>"startTime"</b>: <u>"2025-08-01 00:00:00"</u>,</div>
<div class="l p3"><b>"endTime"</b>: <u>"2025-08-31 23:59:59"</u></div>
<div class="l p2">},</div>
<div class="l p2">{</div>
</div></div>

<div class="a" style="left:1330px;top:215px;width:559px;height:27px;background:#edf1f9;border-bottom:1px solid #d3e3fd"></div>
<svg class="a" style="left:1345px;top:223px" width="10" height="10" viewBox="0 0 10 10" fill="none" stroke="#444" stroke-width="1.200"><path d="M.5.500l9 9M9.500.500l-9 9"/></svg>
<div class="d" style="left:1376px;top:221px">标头</div><div class="d" style="left:1420px;top:221px">载荷</div><div class="d" style="left:1464px;top:221px">预览</div><div class="d" style="left:1508px;top:221px;color:#0b57d0">响应</div><div class="d" style="left:1552px;top:221px">启动器</div><div class="d" style="left:1608px;top:221px">时间</div>
<div class="a" style="left:1498px;top:239px;width:44px;height:3px;background:#0b57d0;border-radius:2px 2px 0 0"></div>

<!-- floating widget -->
<div class="a" style="left:1850px;top:36px;width:32px;height:55px;background:#f5f6fa;border-radius:16px;box-shadow:0 1px 4px rgba(0,0,0,.15)"></div>
<svg class="a" style="left:1856px;top:43px" width="20" height="20" viewBox="0 0 20 20"><circle cx="10" cy="10" r="10" fill="#1559ef"/><path d="M10 5a5 5 0 1 0 0 10l4-3.500A5 5 0 0 0 10 5z" fill="#fff"/><path d="M10 9h4.500v2l-3 2.500z" fill="#1559ef"/></svg>
<div class="a" style="left:1863px;top:76px;width:7px;height:7px;background:radial-gradient(circle,#bbb 1px,transparent 1.200px) 0 0/3.500px 3.500px"></div>

<!-- avatar -->
<svg class="a" style="left:1868px;top:684px" width="21" height="38" viewBox="0 0 21 38"><circle cx="19" cy="19" r="19" fill="#dfe6f4"/><path d="M6 36c2-4 6-6 10-6s5 1 5 2v6H6z" fill="#2d2d33"/><ellipse cx="19" cy="17" rx="12" ry="14" fill="#4a2f24"/><ellipse cx="20" cy="19" rx="8" ry="10" fill="#f3c7b2"/><circle cx="17" cy="17" r="1.300" fill="#333"/><path d="M15 25c2 1 4 1 6 0" stroke="#c9484f" fill="none"/></svg>

<!-- annotations -->
<svg class="a" style="left:0;top:0;pointer-events:none" width="1889" height="847" viewBox="0 0 1889 847">
<rect x="325" y="289" width="120" height="132" rx="30" ry="30" fill="none" stroke="#f81010" stroke-width="2.500"/>
<rect x="1471" y="496" width="211" height="20" rx="10" fill="none" stroke="#f00" stroke-width="2.500"/>
<rect x="1446" y="527" width="286" height="27" rx="14" fill="none" stroke="#f00" stroke-width="2.500"/>
<polygon points="458,359 477,353 475,358.500 1434,508 472,369 474,371" fill="#ff0f0f"/>
<polygon points="420,444 558,636 560.500,634 564,655 544,644 553,640" fill="#ff0f0f"/>
<g font-family="'Liberation Sans','Noto Sans CJK SC',sans-serif" font-weight="900" fill="#ff0a0a" stroke="#fff" stroke-width="6" paint-order="stroke" stroke-linejoin="round" font-size="48">
<text x="448" y="751" textLength="481" lengthAdjust="spacingAndGlyphs">详情页面应该收费项目</text>
<text x="935" y="752" font-size="52" font-weight="700">&gt;</text>
<text x="969" y="751" textLength="387" lengthAdjust="spacingAndGlyphs">收费标准进行显示</text>
<text x="1360" y="751" font-size="46">!</text>
</g>
</svg>
</body></html>
